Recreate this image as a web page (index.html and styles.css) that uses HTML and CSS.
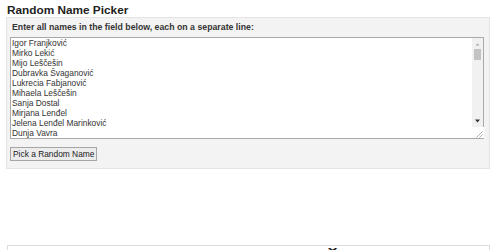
FILE: index.html
```html
<!DOCTYPE html>
<html lang="hr">
<head>
  <meta charset="UTF-8">
  <meta name="viewport" content="width=device-width, initial-scale=1.0">
  <title>Random Name Picker</title>
  <link rel="stylesheet" href="styles.css">
</head>
<body>

  <div class="page">
    <h1 class="title">Random Name Picker</h1>

    <!-- Unos imena -->
    <div class="panel">
      <label class="panel-label" for="names">Enter all names in the field below, each on a separate line:</label>
      <div class="names-box">
        <textarea id="names" class="names" spellcheck="false">Igor Franjković
Mirko Lekić
Mijo Leščešin
Dubravka Švaganović
Lukrecia Fabjanović
Mihaela Leščešin
Sanja Dostal
Mirjana Lenđel
Jelena Lenđel Marinković
Dunja Vavra</textarea>
        <div class="scrollbar">
          <svg class="arrow up" width="11" height="10" viewBox="0 0 11 10"><path d="M3.5 6.5h4L5.5 4.5z" fill="#a3a3a3"/></svg>
          <div class="thumb"></div>
          <div class="track"></div>
          <svg class="arrow down" width="11" height="10" viewBox="0 0 11 10"><path d="M3 3.5h5L5.5 6.5z" fill="#333"/></svg>
          <svg class="grip" width="12" height="11" viewBox="0 0 12 11"><path d="M10.5 4.5l-6 6M10.5 7.5l-3 3" stroke="#b0b0b0" stroke-width="1"/></svg>
        </div>
      </div>
      <div class="actions">
        <button class="pick">Pick a Random Name</button>
      </div>
    </div>

    <!-- Rezultat -->
    <div class="result">Dubravka Švaganović</div>
  </div>

</body>
</html>
```

FILE: styles.css
```css
html, body {
  margin: 0;
  padding: 0;
  overflow: hidden;
  background: #fff;
  color: #333;
  font-family: "Liberation Sans", Arial, sans-serif;
}

.page {
  padding: 3px 10px 0 6px;
}

.title {
  margin: 0 0 0 1px;
  font-size: 11.8px;
  line-height: 14px;
  font-weight: bold;
  color: #222;
}

/* Siva ploča s unosom */
.panel {
  background: #f3f3f3;
  border: 1px solid #e4e4e4;
  padding: 4px 5px 7px 3px;
}
.panel-label {
  display: block;
  margin-left: 2px;
  font-size: 8.75px;
  line-height: 10px;
  font-weight: bold;
  color: #333;
}

.names-box {
  display: flex;
  margin-top: 5px;
  height: 100px;
  border: 1px solid #a9a9a9;
  background: #fff;
}
.names {
  flex: 1;
  margin: 0;
  padding: 0 0 0 1px;
  border: none;
  outline: none;
  resize: none;
  overflow: hidden;
  font-family: "Liberation Sans", Arial, sans-serif;
  font-size: 8.4px;
  line-height: 10px;
  color: #333;
  background: #fff;
}

/* Traka za pomicanje */
.scrollbar {
  display: flex;
  flex-direction: column;
  align-items: center;
  width: 11px;
  background: #f1f1f1;
}
.arrow {
  display: block;
  flex: none;
}
.arrow.up {
  margin-top: 1px;
}
.thumb {
  width: 7px;
  height: 11px;
  background: #c3c3c3;
}
.track {
  flex: 1;
}
.grip {
  display: block;
  flex: none;
  margin-top: 1px;
  background: #fff;
}

.actions {
  display: flex;
  margin-top: 8px;
}
.pick {
  margin: 0;
  padding: 0 2px;
  height: 14px;
  font-family: "Liberation Sans", Arial, sans-serif;
  font-size: 8.4px;
  line-height: 12px;
  color: #222;
  background: #ececec;
  border: 1px solid #a6a6a6;
  border-radius: 0;
}

/* Izabrano ime */
.result {
  margin-top: 76px;
  margin-left: 1px;
  padding: 0 31px 20px 0;
  border: 1px solid #dcdcdc;
  font-size: 24px;
  line-height: 31px;
  font-weight: bold;
  text-align: right;
  color: #222;
}
```
